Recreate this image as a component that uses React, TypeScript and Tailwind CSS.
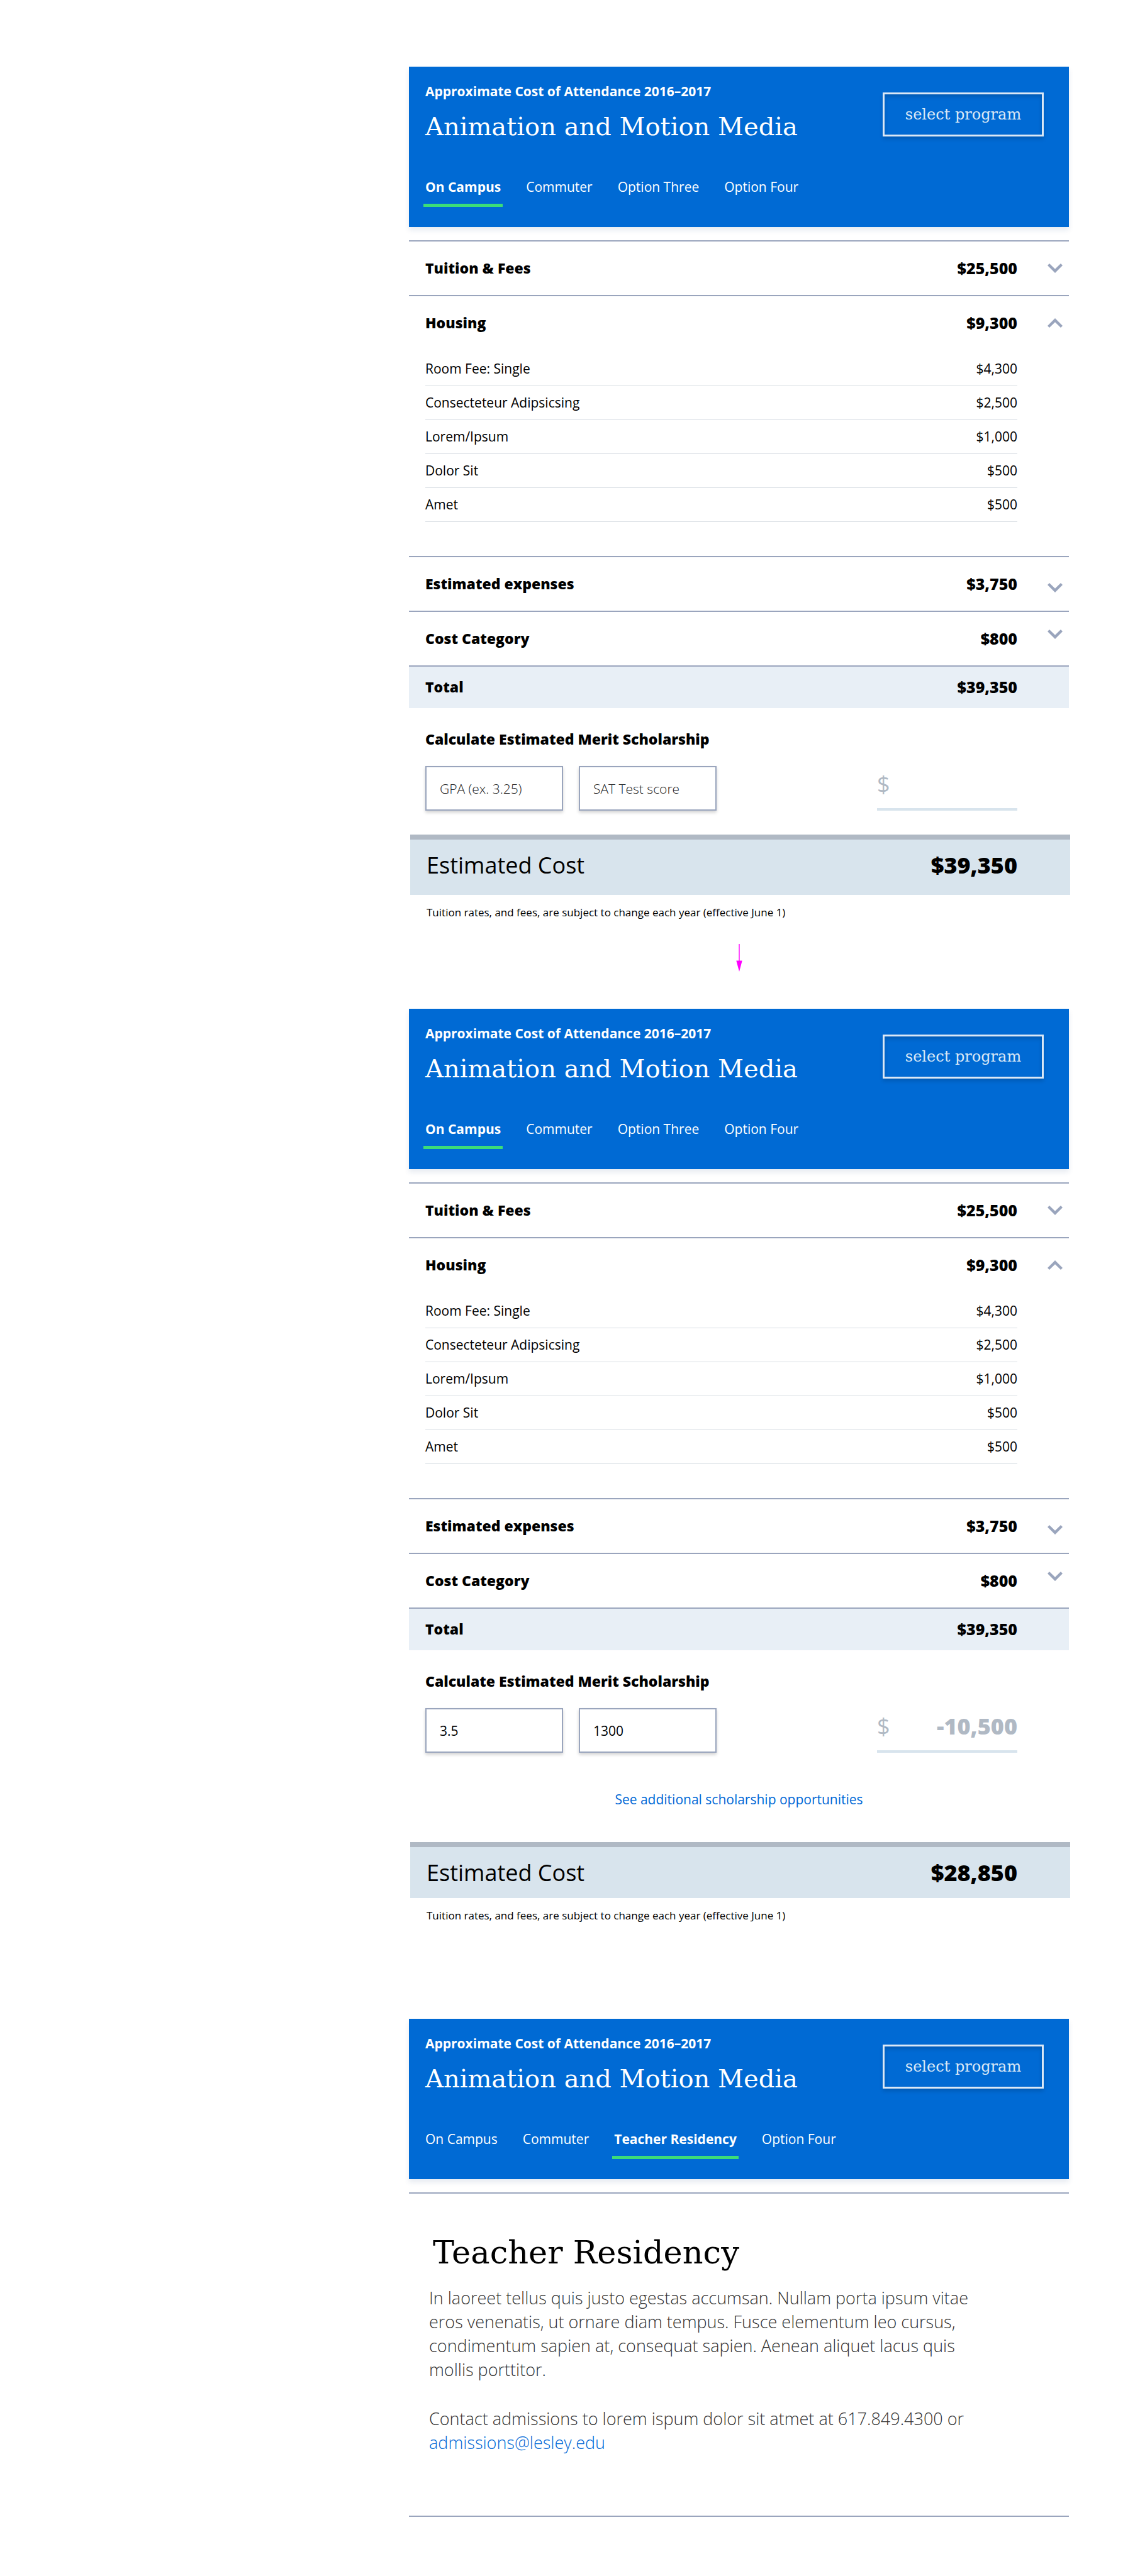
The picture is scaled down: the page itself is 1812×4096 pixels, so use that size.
import { useState } from "react";

type Item = { label: string; amount: string };
type Category = Item & { id: string; items?: Item[]; chevron: "start" | "center" | "end" };

const CATEGORIES: Category[] = [
  { id: "tuition", label: "Tuition & Fees", amount: "$25,500", chevron: "center" },
  {
    id: "housing",
    label: "Housing",
    amount: "$9,300",
    chevron: "center",
    items: [
      { label: "Room Fee: Single", amount: "$4,300" },
      { label: "Consecteteur Adipsicsing", amount: "$2,500" },
      { label: "Lorem/Ipsum", amount: "$1,000" },
      { label: "Dolor Sit", amount: "$500" },
      { label: "Amet", amount: "$500" },
    ],
  },
  { id: "expenses", label: "Estimated expenses", amount: "$3,750", chevron: "end" },
  { id: "category", label: "Cost Category", amount: "$800", chevron: "start" },
];

const CHEVRON_ALIGN = { start: "self-start", center: "self-center", end: "self-end" };

function Chevron({ up = false }: { up?: boolean }) {
  return (
    <svg viewBox="0 0 24 15" className="h-[15px] w-6 fill-[#9aa5bd]" aria-hidden="true">
      <path d={up ? "M12 0 24 12 21 15 12 6.2 3 15 0 12Z" : "M12 15 24 3 21 0 12 8.8 3 0 0 3Z"} />
    </svg>
  );
}

function Header({ tabs, initial }: { tabs: string[]; initial: string }) {
  const [active, setActive] = useState(initial);
  return (
    <header className="bg-[#006ad4] pt-[25px] pr-10 pb-8 pl-[26px] text-white shadow-[0_5px_8px_rgba(20,60,120,0.1)]">
      <div className="flex items-start justify-between">
        <div>
          <p className="text-[21px] leading-7 font-bold">Approximate Cost of Attendance 2016–2017</p>
          <h1 className="mt-[14px] font-['DejaVu_Serif',serif] text-[40px] leading-[56px]">
            Animation and Motion Media
          </h1>
        </div>
        <button
          type="button"
          className="mt-4 h-[70px] w-[256px] border-3 border-[#dbe8f6] font-['DejaVu_Serif',serif] text-[24px] text-[#dbe8f6] shadow-[0_4px_6px_rgba(0,0,0,0.15),inset_0_4px_6px_rgba(0,0,0,0.15)]"
        >
          select program
        </button>
      </div>
      <nav className="-mx-[3px] mt-[54px] flex gap-[34px]">
        {tabs.map((tab) => (
          <button
            key={tab}
            type="button"
            aria-pressed={tab === active}
            onClick={() => setActive(tab)}
            className={
              tab === active
                ? "border-b-5 border-[#3cdd78] px-[3px] pb-[13px] text-[21px] leading-7 font-bold"
                : "border-b-5 border-transparent px-[3px] pb-[13px] text-[21px] leading-7"
            }
          >
            {tab}
          </button>
        ))}
      </nav>
    </header>
  );
}

function CategoryRow({ category }: { category: Category }) {
  const [open, setOpen] = useState(Boolean(category.items));
  const expanded = open && Boolean(category.items);
  return (
    <section className="border-t-2 border-[#9aa5bd]">
      <button
        type="button"
        aria-expanded={expanded}
        onClick={() => setOpen(!open)}
        className={
          expanded
            ? "flex w-full pt-7 pr-[10px] pl-[26px] text-left text-[23px] leading-7 font-extrabold"
            : "flex w-full pt-7 pr-[10px] pb-[29px] pl-[26px] text-left text-[23px] leading-7 font-extrabold"
        }
      >
        <span className="flex-1">{category.label}</span>
        <span className="mr-12 text-[25px]">{category.amount}</span>
        <span className={CHEVRON_ALIGN[category.chevron]}>
          <Chevron up={expanded} />
        </span>
      </button>
      {expanded && (
        <div className="pt-[33px] pr-[82px] pb-[54px] pl-[26px]">
          <table className="w-full text-[21px] leading-7 font-medium">
            <tbody>
              {category.items?.map((item) => (
                <tr key={item.label} className="border-b border-[#d6dce2]">
                  <th scope="row" className="pt-3 pb-[13px] text-left font-medium">{item.label}</th>
                  <td className="pt-3 pb-[13px] text-right">{item.amount}</td>
                </tr>
              ))}
            </tbody>
          </table>
        </div>
      )}
    </section>
  );
}

function ScoreInput({ label, value }: { label: string; value?: string }) {
  return (
    <input
      type="text"
      aria-label={label}
      placeholder={label}
      defaultValue={value}
      className="h-[71px] w-[219px] border-2 border-[#9aa5bd] bg-white px-[21px] text-[21px] font-medium text-black shadow-[0_3px_5px_rgba(0,0,0,0.18)] outline-none placeholder:font-light placeholder:text-[#222]"
    />
  );
}

type CostPanelProps = { gpa?: string; sat?: string; award?: string; estimate: string };

function CostPanel({ gpa, sat, award, estimate }: CostPanelProps) {
  return (
    <article>
      <Header tabs={["On Campus", "Commuter", "Option Three", "Option Four"]} initial="On Campus" />
      <div className="mt-[21px]">
        {CATEGORIES.map((category) => (
          <CategoryRow key={category.id} category={category} />
        ))}
      </div>
      <div className="flex justify-between border-t-2 border-[#9aa5bd] bg-[#e8eff6] pt-[18px] pr-[82px] pb-5 pl-[26px] text-[23px] leading-7 font-extrabold">
        <span>Total</span>
        <span className="text-[25px]">$39,350</span>
      </div>
      <form className="pt-[35px] pr-[82px] pl-[26px]" onSubmit={(event) => event.preventDefault()}>
        <h2 className="text-[23px] leading-7 font-extrabold">Calculate Estimated Merit Scholarship</h2>
        <div className="mt-[29px] flex items-end">
          <div className="flex flex-1 gap-[25px]">
            <ScoreInput label="GPA (ex. 3.25)" value={gpa} />
            <ScoreInput label="SAT Test score" value={sat} />
          </div>
          <output className="flex w-[223px] justify-between border-b-4 border-[#d8e4ed] pb-[14px] text-[36px] leading-[48px] text-[#b0b9c4]">
            <span>$</span>
            <span className="font-extrabold">{award}</span>
          </output>
        </div>
      </form>
      {award && (
        <p className="mt-[60px] mb-[54px] text-center text-[21px] leading-7 font-medium">
          <a href="#scholarships" className="text-[#0068d6]">See additional scholarship opportunities</a>
        </p>
      )}
      <div
        className={
          award
            ? "-mr-[2px] ml-[2px] flex justify-between border-t-8 border-[#b0b9c4] bg-[#d8e4ed] pt-[17px] pr-[84px] pb-4 pl-[26px] text-[36px] leading-[48px]"
            : "-mr-[2px] mt-[38px] ml-[2px] flex justify-between border-t-8 border-[#b0b9c4] bg-[#d8e4ed] pt-[17px] pr-[84px] pb-[23px] pl-[26px] text-[36px] leading-[48px]"
        }
      >
        <span className="font-medium">Estimated Cost</span>
        <span className="font-extrabold">{estimate}</span>
      </div>
      <p className="mt-4 pl-7 text-[17px] leading-6">
        Tuition rates, and fees, are subject to change each year (effective June 1)
      </p>
    </article>
  );
}

function ResidencyPanel() {
  return (
    <article>
      <Header tabs={["On Campus", "Commuter", "Teacher Residency", "Option Four"]} initial="Teacher Residency" />
      <div className="mt-[21px] border-y-2 border-[#9aa5bd] pt-[62px] pb-[97px]">
        <h2 className="pl-[38px] font-['DejaVu_Serif',serif] text-[51px] leading-[64px]">Teacher Residency</h2>
        <div className="mt-[21px] flex max-w-[912px] flex-col gap-10 pl-8 text-[27px] leading-[38px] font-light text-[#333]">
          <p>
            In laoreet tellus quis justo egestas accumsan. Nullam porta ipsum vitae eros venenatis, ut ornare diam
            tempus. Fusce elementum leo cursus, condimentum sapien at, consequat sapien. Aenean aliquet lacus quis
            mollis porttitor.
          </p>
          <p>
            Contact admissions to lorem ispum dolor sit atmet at 617.849.4300 or{" "}
            <a href="mailto:admissions@lesley.edu" className="text-[#0068d6]">admissions@lesley.edu</a>
          </p>
        </div>
      </div>
    </article>
  );
}

export default function App() {
  return (
    <main className="bg-white pt-[106px] pr-[113px] pb-[94px] pl-[650px] font-['Open_Sans','Noto_Sans',sans-serif] text-black">
      <CostPanel estimate="$39,350" />
      <svg viewBox="0 0 10 44" className="mx-auto mt-[38px] mb-[59px] h-11 w-[10px] fill-[#f0f]" aria-hidden="true">
        <path d="M4.3 0h1.4v27H4.3ZM0.3 26.5h9.4L5 44Z" />
      </svg>
      <CostPanel gpa="3.5" sat="1300" award="-10,500" estimate="$28,850" />
      <div className="mt-[152px]">
        <ResidencyPanel />
      </div>
    </main>
  );
}
